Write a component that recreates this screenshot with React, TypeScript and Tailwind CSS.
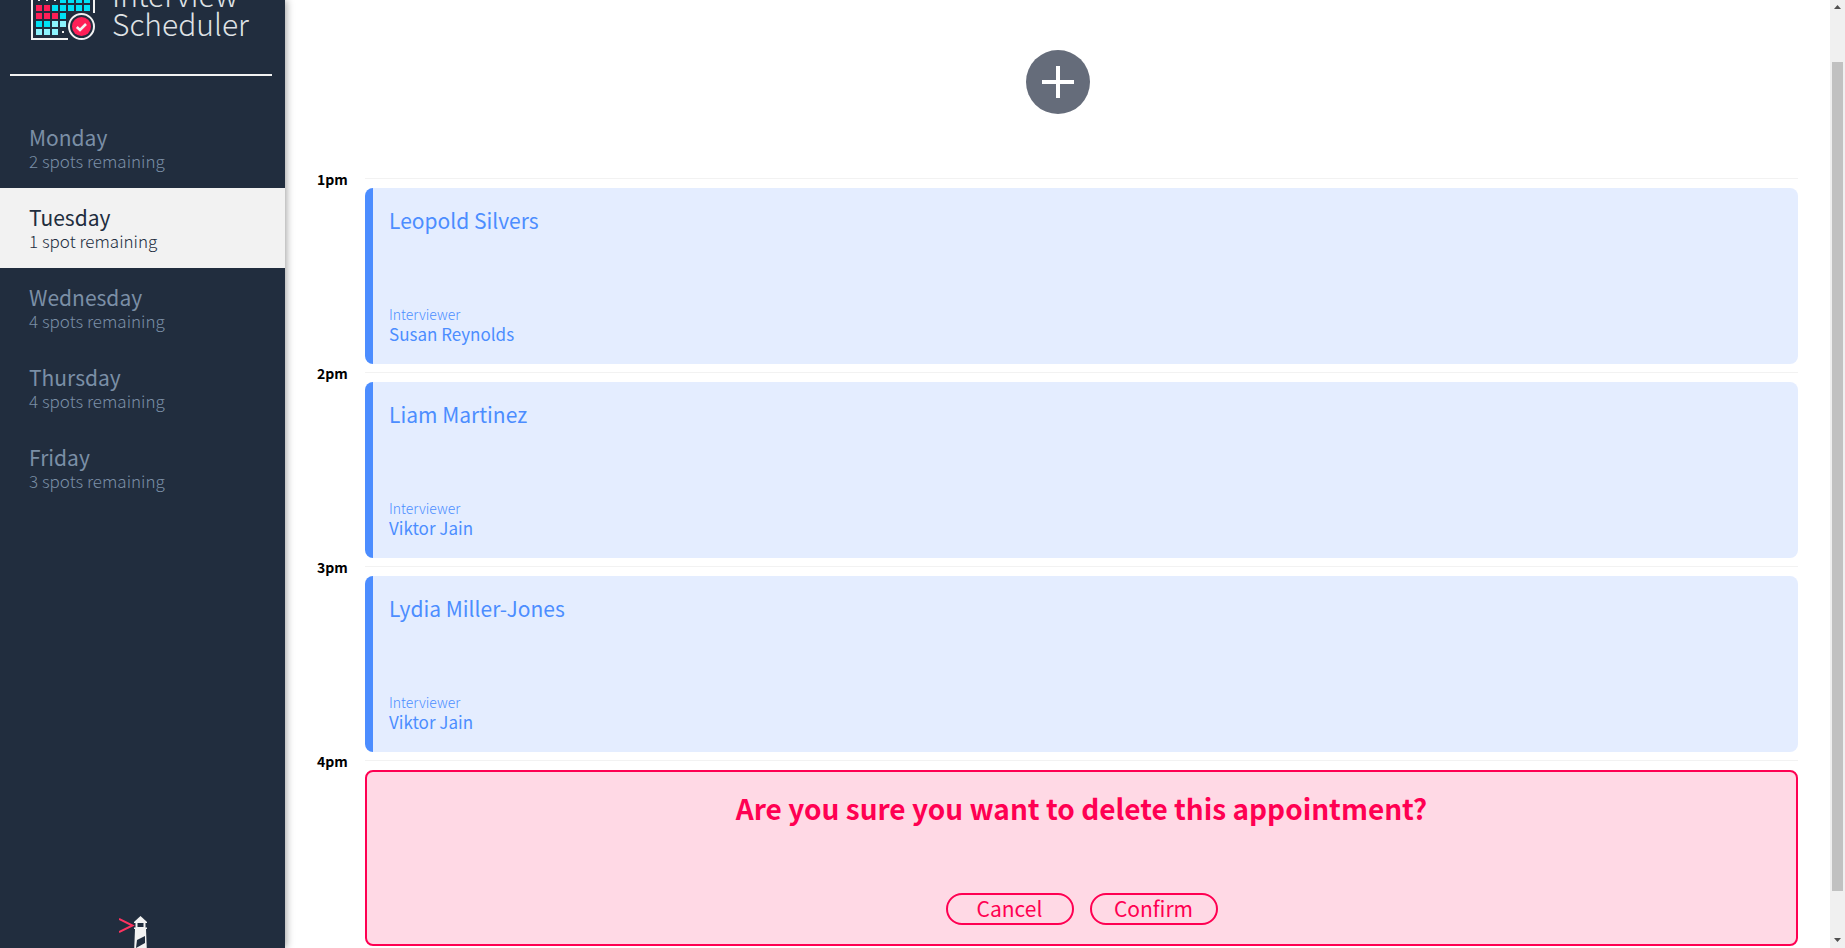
import React from "react";

type Day = { name: string; spots: number };
type Slot = { time: string; student: string; interviewer: string };

const days: Day[] = [
  { name: "Monday", spots: 2 },
  { name: "Tuesday", spots: 1 },
  { name: "Wednesday", spots: 4 },
  { name: "Thursday", spots: 4 },
  { name: "Friday", spots: 3 },
];

const slots: Slot[] = [
  { time: "1pm", student: "Leopold Silvers", interviewer: "Susan Reynolds" },
  { time: "2pm", student: "Liam Martinez", interviewer: "Viktor Jain" },
  { time: "3pm", student: "Lydia Miller-Jones", interviewer: "Viktor Jain" },
];

// One letter per calendar cell: w = dot, r = red, c = cyan, l = light cyan.
const calendar = ["wwwcccc", "rrccccc", "rrrc", "ccll", "lllw"];
const cellColors: Record<string, string> = { w: "#f2f2f2", r: "#ff1f57", c: "#00e1f5", l: "#8df3fd" };

function CalendarMark() {
  return (
    <svg width="64" height="64" viewBox="0 0 64 64" aria-hidden="true" className="shrink-0">
      <path d="M63 37V5H1V63H37" fill="none" stroke="#f2f2f2" strokeWidth="2" />
      <path d="M0 13H64M14 0V8M50 0V8" stroke="#f2f2f2" strokeWidth="2" />
      {calendar.map((row, r) =>
        row.split("").map((cell, c) =>
          cell === "w" ? (
            <rect key={`${r}-${c}`} x={7 + c * 8} y={23 + r * 8} width="2" height="2" fill={cellColors.w} />
          ) : (
            <rect key={`${r}-${c}`} x={5 + c * 8} y={21 + r * 8} width="6" height="6" fill={cellColors[cell]} />
          )
        )
      )}
      <circle cx="50.500" cy="50.500" r="14" fill="#212d3e" />
      <circle cx="50.500" cy="50.500" r="12.500" fill="none" stroke="#f2f2f2" strokeWidth="2" />
      <circle cx="50.500" cy="50.500" r="9.500" fill="#ff1f57" />
      <path d="M45.800 51L49 54L55 48" fill="none" stroke="#f2f2f2" strokeWidth="2.600" />
    </svg>
  );
}

function LighthouseMark() {
  return (
    <svg width="28" height="64" viewBox="0 0 28 64" aria-hidden="true" className="shrink-0">
      <path d="M0 4L13.500 10.500L0 17" fill="none" stroke="#ff3360" strokeWidth="2" />
      <path d="M15 7L21.500 1L28 7V8H15Z" fill="#f2f2f2" />
      <path d="M17.500 7V13H25.500V7" fill="none" stroke="#f2f2f2" strokeWidth="2" />
      <path d="M15 12.500H28V14H27L29 64H14L16 14H15Z" fill="#f2f2f2" />
      <path d="M18 25L26 21V28L17 33Z" fill="#212d3e" />
    </svg>
  );
}

function DayItem({ day, selected }: { day: Day; selected: boolean }) {
  return (
    <li>
      <button
        type="button"
        aria-pressed={selected}
        className={
          selected
            ? "block w-full bg-[#f2f2f2] py-4 pl-[29px] text-left text-[#212d3e]"
            : "block w-full py-4 pl-[29px] text-left text-[#7b8fa6]"
        }
      >
        <span className="block text-[21px] leading-[26px]">{day.name}</span>
        <span className="block text-[17px] leading-[22px] font-light">
          {day.spots} {day.spots === 1 ? "spot" : "spots"} remaining
        </span>
      </button>
    </li>
  );
}

function SlotHeader({ time }: { time: string }) {
  return (
    <header className="flex h-[18px] items-center gap-4">
      <h4 className="w-8 text-sm leading-[18px] font-bold text-black">{time}</h4>
      <hr className="mb-px flex-1 border-[#f2f2f2]" />
    </header>
  );
}

function Appointment({ slot }: { slot: Slot }) {
  return (
    <article>
      <SlotHeader time={slot.time} />
      <div className="ml-12 flex h-44 flex-col justify-between rounded-lg border-l-8 border-[#4c8dff] bg-[#e4edff] px-4 pt-4 pb-5 text-[#4c8dff]">
        <h2 className="text-[21px] leading-8">{slot.student}</h2>
        <div>
          <h4 className="text-sm leading-5 font-light">Interviewer</h4>
          <h3 className="text-[17px] leading-5">{slot.interviewer}</h3>
        </div>
      </div>
    </article>
  );
}

const pill = "h-8 w-32 rounded-full border-2 border-[#ff0052] pb-0.5 text-[21px] leading-6";

export default function App() {
  return (
    <div className="flex h-screen overflow-hidden bg-white font-['Noto_Sans_CJK_KR','Noto_Sans',sans-serif]">
      <aside className="z-10 flex w-[285px] shrink-0 flex-col overflow-hidden bg-[#212d3e] shadow-[1px_0_8px_rgba(0,0,0,0.4)]">
        <div className="-mt-6 ml-[31px] flex h-16 items-end gap-[17px]">
          <CalendarMark />
          <h1 className="mb-0.5 text-3xl leading-[29px] font-light text-[#dfe2e5]">
            Interview
            <br />
            Scheduler
          </h1>
        </div>
        <hr className="mt-[34px] mr-[13px] ml-[10px] border-t-2 border-[#f2f2f2]" />
        <nav aria-label="Days" className="mt-8">
          <ul>
            {days.map((day) => (
              <DayItem key={day.name} day={day} selected={day.name === "Tuesday"} />
            ))}
          </ul>
        </nav>
        <div className="mt-auto -mb-[31px] flex justify-center pr-[19px]">
          <LighthouseMark />
        </div>
      </aside>

      <main className="min-w-0 flex-1 overflow-hidden px-8">
        <div className="-mt-[6px] flex h-44 items-center justify-center">
          <button
            type="button"
            aria-label="Add appointment"
            className="flex size-16 items-center justify-center rounded-full bg-[#656c7a]"
          >
            <svg width="32" height="32" viewBox="0 0 32 32" aria-hidden="true">
              <path d="M16 0V32M0 16H32" stroke="#fff" strokeWidth="4" />
            </svg>
          </button>
        </div>
        {slots.map((slot) => (
          <Appointment key={slot.time} slot={slot} />
        ))}
        <article>
          <SlotHeader time="4pm" />
          <div className="ml-12 flex h-44 flex-col items-center justify-between rounded-lg border-2 border-[#ff0052] bg-[#ffd9e5] pt-5 pb-[19px] text-[#ff0052]">
            <h1 className="text-[28px] leading-8 font-bold">Are you sure you want to delete this appointment?</h1>
            <div className="flex gap-4">
              <button type="button" className={pill}>Cancel</button>
              <button type="button" className={pill}>Confirm</button>
            </div>
          </div>
        </article>
      </main>

      <div aria-hidden="true" className="flex w-[15px] shrink-0 flex-col items-center justify-between bg-[#f0f0f0]">
        <svg width="15" height="62" viewBox="0 0 15 62" className="shrink-0">
          <path d="M4 9L7.500 5L11 9Z" fill="#505050" />
        </svg>
        <div className="w-[11px] flex-1 bg-[#c1c1c1]" />
        <svg width="15" height="57" viewBox="0 0 15 57" className="shrink-0">
          <path d="M4 47L7.500 51L11 47Z" fill="#505050" />
        </svg>
      </div>
    </div>
  );
}
